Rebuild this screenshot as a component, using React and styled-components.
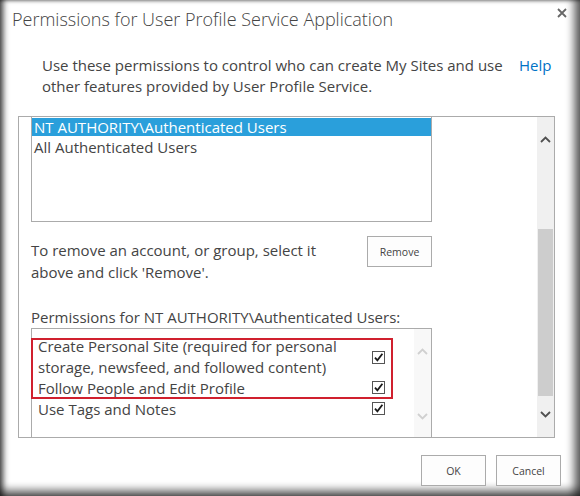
import React from "react";
import styled, { createGlobalStyle } from "styled-components";

const Global = createGlobalStyle`
  html, body { margin: 0; padding: 0; background: #fff; }
  body { font-family: "Open Sans", "Noto Sans", sans-serif; color: #444; }
  * { box-sizing: border-box; }
`;

const Frame = styled.div`
  width: 580px;
  height: 496px;
  background: #fff;
  display: flex;
  flex-direction: column;
  overflow: hidden;
  box-shadow:
    inset 6px 0 6px -3px rgba(0, 0, 0, 0.75),
    inset -10px 0 8px -4px rgba(0, 0, 0, 0.6),
    inset 0 -10px 8px -4px rgba(0, 0, 0, 0.6),
    inset 0 3px 3px -2px rgba(0, 0, 0, 0.3);
`;

const TitleBar = styled.div`
  display: flex;
  align-items: flex-start;
  justify-content: space-between;
  padding: 7px 13px 0 12px;
`;

const Title = styled.h1`
  margin: 0;
  font-size: 18px;
  line-height: 24px;
  font-weight: 300;
  color: #444;
`;

const CloseButton = styled.button`
  border: 0;
  background: none;
  padding: 0;
  margin-top: 1px;
  width: 10px;
  height: 10px;
  display: flex;
  cursor: pointer;
`;

const Intro = styled.div`
  display: flex;
  align-items: flex-start;
  padding: 0 0 0 42px;
  margin-top: 24px;
  font-size: 15px;
  line-height: 21px;
`;

const IntroText = styled.p`
  margin: 0;
  width: 477px;
`;

const HelpLink = styled.a`
  color: #0072c6;
  text-decoration: none;
`;

const ScrollArea = styled.div`
  margin: 19px 0 0 18px;
  width: 537px;
  height: 322px;
  border: 1px solid #ababab;
  display: flex;
`;

const ScrollContent = styled.div`
  flex: 1;
  overflow: hidden;
  padding-left: 12px;
  font-size: 15px;
  line-height: 21px;
`;

const Scrollbar = styled.div`
  width: 17px;
  background: ${(p) => p.$track};
  display: flex;
  flex-direction: column;
  flex-shrink: 0;
`;

const ArrowCell = styled.div`
  height: ${(p) => p.$h}px;
  margin-top: ${(p) => p.$mt || "0px"};
  margin-bottom: ${(p) => p.$mb || "0px"};
  display: flex;
  align-items: center;
  justify-content: center;
  flex-shrink: 0;
`;

const Thumb = styled.div`
  margin: ${(p) => p.$top}px 1px 0;
  height: ${(p) => p.$height}px;
  background: #cdcdcd;
  flex-shrink: 0;
`;

const ListBox = styled.div`
  width: 401px;
  height: 106px;
  margin-top: -1px;
  border: 1px solid #ababab;
  padding-top: 1px;
`;

const Option = styled.div`
  height: ${(p) => (p.$selected ? "18px" : "21px")};
  line-height: 18px;
  padding-left: 2px;
  white-space: nowrap;
  color: ${(p) => (p.$selected ? "#fff" : "#444")};
  background: ${(p) => (p.$selected ? "#2a9fdb" : "transparent")};
  margin-bottom: ${(p) => (p.$selected ? "2px" : "0")};
`;

const RemoveRow = styled.div`
  width: 401px;
  display: flex;
  justify-content: space-between;
  align-items: flex-start;
  margin-top: 14px;
`;

const RemoveHint = styled.p`
  margin: 3px 0 0;
  line-height: 22px;
`;

const Button = styled.button`
  width: 65px;
  height: 31px;
  border: 1px solid #ababab;
  background: #fdfdfd;
  color: #444;
  font-family: "Open Sans", "Noto Sans", sans-serif;
  font-size: 10.5px;
  padding: 0;
  cursor: pointer;
`;

const SectionLabel = styled.div`
  margin-top: 24px;
  line-height: 21px;
`;

const PermBox = styled.div`
  width: 401px;
  height: 124px;
  border: 1px solid #ababab;
  border-bottom: 0;
  display: flex;
`;

const PermList = styled.div`
  flex: 1;
  position: relative;
  padding-top: 7px;
`;

const PermItem = styled.div`
  display: flex;
  align-items: center;
  justify-content: space-between;
  padding: 0 29px 0 6px;
`;

const PermText = styled.span`
  line-height: 21px;
`;

const Box = styled.span`
  width: 13px;
  height: 13px;
  border: 1px solid #555;
  background: #fff;
  display: flex;
  align-items: center;
  justify-content: center;
  flex-shrink: 0;
  margin-top: ${(p) => p.$mt || "0px"};
`;

/* red call-out drawn over the first two permissions */
const CallOut = styled.div`
  position: absolute;
  left: -1px;
  top: 9px;
  width: 362px;
  height: 61px;
  border: 2px solid #d0202e;
  pointer-events: none;
`;

const Footer = styled.div`
  display: flex;
  justify-content: flex-end;
  gap: 10px;
  margin-top: 17px;
  padding-right: 19px;
`;

const Chevron = ({ up, color }) => (
  <svg width="11" height="7" viewBox="0 0 11 7">
    <polyline
      points={up ? "1,6 5.5,1.5 10,6" : "1,1 5.5,5.5 10,1"}
      fill="none"
      stroke={color}
      strokeWidth="1.8"
    />
  </svg>
);

const Check = ({ mt }) => (
  <Box $mt={mt}>
    <svg width="11" height="11" viewBox="0 0 11 11">
      <path d="M2 5.6 L4.4 8.4 L9.4 1.8" fill="none" stroke="#1a1a1a" strokeWidth="1.8" />
    </svg>
  </Box>
);

const permissions = [
  { label: ["Create Personal Site (required for personal", "storage, newsfeed, and followed content)"] },
  { label: ["Follow People and Edit Profile"], mt: "-3px" },
  { label: ["Use Tags and Notes"], mt: "-3px" },
];

export default function App() {
  return (
    <>
      <Global />
      <Frame>
        <TitleBar>
          <Title>Permissions for User Profile Service Application</Title>
          <CloseButton aria-label="Close">
            <svg width="10" height="10" viewBox="0 0 10 10">
              <path d="M1 1 L9 9 M9 1 L1 9" stroke="#666" strokeWidth="1.8" />
            </svg>
          </CloseButton>
        </TitleBar>

        <Intro>
          <IntroText>
            Use these permissions to control who can create My Sites and use
            <br />
            other features provided by User Profile Service.
          </IntroText>
          <HelpLink href="#">Help</HelpLink>
        </Intro>

        <ScrollArea>
          <ScrollContent>
            <ListBox>
              <Option $selected>NT AUTHORITY\Authenticated Users</Option>
              <Option>All Authenticated Users</Option>
            </ListBox>

            <RemoveRow>
              <RemoveHint>
                To remove an account, or group, select it
                <br />
                above and click 'Remove'.
              </RemoveHint>
              <Button>Remove</Button>
            </RemoveRow>

            <SectionLabel>Permissions for NT AUTHORITY\Authenticated Users:</SectionLabel>
            <PermBox>
              <PermList>
                {permissions.map((p, i) => (
                  <PermItem key={i}>
                    <PermText>
                      {p.label.map((line, j) => (
                        <React.Fragment key={j}>
                          {j > 0 && <br />}
                          {line}
                        </React.Fragment>
                      ))}
                    </PermText>
                    <Check mt={p.mt} />
                  </PermItem>
                ))}
                <CallOut />
              </PermList>
              <Scrollbar $track="#f8f8f8">
                <ArrowCell $h={44}>
                  <Chevron up color="#d0d0d0" />
                </ArrowCell>
                <ArrowCell $h={44} $mt="21px">
                  <Chevron color="#d0d0d0" />
                </ArrowCell>
              </Scrollbar>
            </PermBox>
          </ScrollContent>

          <Scrollbar $track="#f0f0f0">
            <ArrowCell $h={44}>
              <Chevron up color="#505050" />
            </ArrowCell>
            <Thumb $top={68} $height={167} />
            <ArrowCell $h={34} $mt="auto" $mb="6px">
              <Chevron color="#505050" />
            </ArrowCell>
          </Scrollbar>
        </ScrollArea>

        <Footer>
          <Button>OK</Button>
          <Button>Cancel</Button>
        </Footer>
      </Frame>
    </>
  );
}
